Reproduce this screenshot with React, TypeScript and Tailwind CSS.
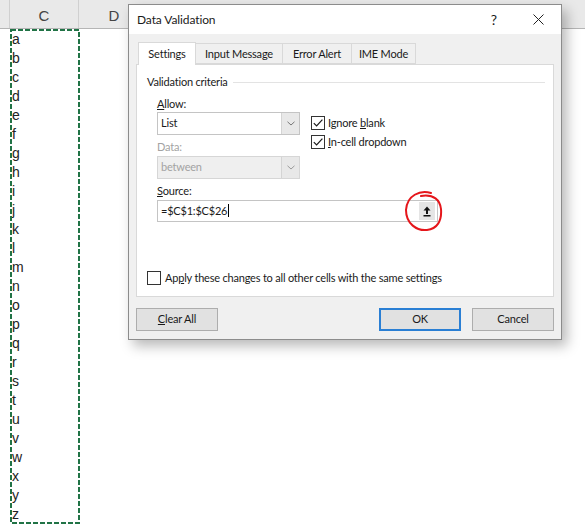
import React from "react";

const letters = "abcdefghijklmnopqrstuvwxyz".split("");

function Check({ on }: { on: boolean }) {
  return (
    <span className="flex h-[14px] w-[14px] shrink-0 items-center justify-center border border-[#333] bg-white">
      {on && (
        <svg width="12" height="12" viewBox="0 0 12 12">
          <path d="M1.8 6.2 L4.6 9 L10.4 2.6" fill="none" stroke="#1a1a1a" strokeWidth="1.2" />
        </svg>
      )}
    </span>
  );
}

function Chevron({ color }: { color: string }) {
  return (
    <svg width="8" height="5" viewBox="0 0 8 5">
      <path d="M0.5 0.8 L4 4 L7.5 0.8" fill="none" stroke={color} strokeWidth="1" />
    </svg>
  );
}

function Select({ value, disabled }: { value: string; disabled?: boolean }) {
  return (
    <div
      className={`flex h-[23px] w-[143px] border ${
        disabled ? "border-[#d6d6d6] bg-[#efefef] text-[#a3a3a3]" : "border-[#c4c4c4] bg-white text-[#1a1a1a]"
      }`}
    >
      <span className="flex flex-1 items-center pl-[3px]">{value}</span>
      <span className="flex w-[18px] items-center justify-center border-l border-[#d4d4d4] bg-[#e8e8e8]">
        <Chevron color={disabled ? "#9a9a9a" : "#777"} />
      </span>
    </div>
  );
}

function Btn({ label, u, primary }: { label: string; u?: boolean; primary?: boolean }) {
  return (
    <div
      className={`flex h-[23px] w-[82px] items-center justify-center bg-[#e1e1e1] text-[#1a1a1a] ${
        primary ? "border-2 border-[#2a7fd4]" : "border border-[#adadad]"
      }`}
    >
      {u ? (
        <span>
          <span className="underline">{label[0]}</span>
          {label.slice(1)}
        </span>
      ) : (
        label
      )}
    </div>
  );
}

function Dialog() {
  return (
    <div
      className="absolute left-[128px] top-[4px] flex h-[336px] w-[434px] flex-col border border-[#8c8c8c] bg-[#f0f0f0] text-[11px] tracking-[-0.2px] shadow-[5px_6px_12px_rgba(0,0,0,0.28)]"
      style={{ fontFamily: 'Lato, "Noto Sans", sans-serif' }}
    >
      {/* title bar */}
      <div className="flex h-[29px] items-center bg-white pl-[8px] pr-[17px] text-[12px] tracking-[-0.1px] text-[#1a1a1a]">
        <span className="flex-1 pt-px">Data Validation</span>
        <span className="mr-[36px] text-[14px]">?</span>
        <svg width="11" height="11" viewBox="0 0 11 11">
          <path d="M0.5 0.5 L10.5 10.5 M10.5 0.5 L0.5 10.5" stroke="#222" strokeWidth="1" />
        </svg>
      </div>

      <div className="flex flex-1 flex-col px-[7px] pt-[8px]">
        {/* tabs */}
        <div className="flex h-[22px] items-end pl-[2px] text-[#1a1a1a]">
          <div className="relative z-10 -mb-px flex h-[23px] w-[58px] items-center justify-center border border-b-0 border-[#d9d9d9] bg-white pt-px">
            Settings
          </div>
          <div className="flex h-[21px] w-[87px] items-center justify-center border border-l-0 border-[#d9d9d9] pt-px">
            Input Message
          </div>
          <div className="flex h-[21px] w-[69px] items-center justify-center border border-l-0 border-[#d9d9d9] pt-px">
            Error Alert
          </div>
          <div className="flex h-[21px] w-[64px] items-center justify-center border border-l-0 border-[#d9d9d9] pt-px">
            IME Mode
          </div>
        </div>

        {/* panel */}
        <div className="flex h-[233px] flex-col border border-[#d9d9d9] bg-white pl-[10px] text-[#1a1a1a]">
          <div className="mt-[10px] flex h-[15px] items-center pr-[8px]">
            <span>Validation criteria</span>
            <span className="ml-[5px] h-px flex-1 bg-[#e3e3e3]" />
          </div>

          <div className="flex pl-[10px]">
            <div className="flex w-[143px] flex-col">
              <span className="mt-[7px] flex h-[15px] items-center">
                <span className="underline">A</span>llow:
              </span>
              <div>
                <Select value="List" />
              </div>
              <span className="mt-[5px] flex h-[15px] items-center text-[#a3a3a3]">Data:</span>
              <div className="mt-px">
                <Select value="between" disabled />
              </div>
            </div>
            <div className="ml-[11px] mt-[26px] flex flex-col gap-[5px]">
              <div className="flex h-[14px] items-center gap-[3px]">
                <Check on />
                <span>
                  Ignore <span className="underline">b</span>lank
                </span>
              </div>
              <div className="flex h-[14px] items-center gap-[3px]">
                <Check on />
                <span>
                  <span className="underline">I</span>n-cell dropdown
                </span>
              </div>
            </div>
          </div>

          <div className="flex flex-col pl-[10px]">
            <span className="mt-[5px] flex h-[15px] items-center">
              <span className="underline">S</span>ource:
            </span>
            <div className="relative mt-px flex h-[22px] w-[281px] items-center border border-[#c4c4c4] bg-white pl-[3px] pr-[2px]">
              <span className="flex-1">
                =$C$1:$C$26<span className="ml-px inline-block h-[13px] w-px translate-y-[2px] bg-black" />
              </span>
              <span className="flex h-[18px] w-[16px] items-center justify-center bg-[#e5e5e5]">
                <svg width="8" height="11" viewBox="0 0 8 11">
                  <path d="M4 0.5 L7.5 4.5 L5 4.5 L5 8 L3 8 L3 4.5 L0.5 4.5 Z" fill="#111" />
                  <rect x="0.5" y="9" width="7" height="1.5" fill="#111" />
                </svg>
              </span>
              <svg
                className="absolute left-[246px] top-[-11px]"
                width="42"
                height="44"
                viewBox="0 0 42 44"
              >
                <path
                  d="M27 3 C16 0, 3 5, 2 20 C2 34, 13 41, 23 40 C33 39, 38 31, 37 19 C36 10, 30 4, 17 6"
                  fill="none"
                  stroke="#e5161b"
                  strokeWidth="2"
                  strokeLinecap="round"
                />
              </svg>
            </div>
          </div>

          <div className="mb-[10px] mt-auto flex items-center gap-[4px]">
            <Check on={false} />
            <span>
              Ap<span className="underline">p</span>ly these changes to all other cells with the same settings
            </span>
          </div>
        </div>

        {/* buttons */}
        <div className="mt-[11px] flex">
          <Btn label="Clear All" u />
          <div className="ml-auto flex gap-[11px]">
            <Btn label="OK" primary />
            <Btn label="Cancel" />
          </div>
        </div>
      </div>
    </div>
  );
}

export default function App() {
  return (
    <div
      className="relative h-[528px] w-[585px] overflow-hidden bg-white"
      style={{ fontFamily: '"Liberation Sans", Arial, sans-serif' }}
    >
      {/* column headers */}
      <div className="flex h-[29px] border-b border-[#b5b5b5] bg-[#e9e9e9] text-[15px] text-[#444]">
        <div className="w-[10px] border-r border-[#d0d0d0]" />
        <div className="flex w-[69px] items-end justify-center border-r border-[#d0d0d0] pb-[1px]">C</div>
        <div className="flex w-[70px] items-end justify-center pb-[1px]">D</div>
        <div className="flex-1" />
      </div>

      {/* column C */}
      <div className="flex">
        <div className="w-[12px]" />
        <div className="flex flex-col pt-[1px] text-[14px] text-[#222]">
          {letters.map((l) => (
            <div key={l} className="flex h-[19px] items-center">
              {l}
            </div>
          ))}
        </div>
      </div>

      {/* copy marquee */}
      <svg className="absolute left-[10px] top-[29px]" width="70" height="495" viewBox="0 0 70 495">
        <rect x="1" y="1" width="68" height="493" fill="none" stroke="#217346" strokeWidth="2" strokeDasharray="5 2" />
      </svg>

      <Dialog />
    </div>
  );
}
